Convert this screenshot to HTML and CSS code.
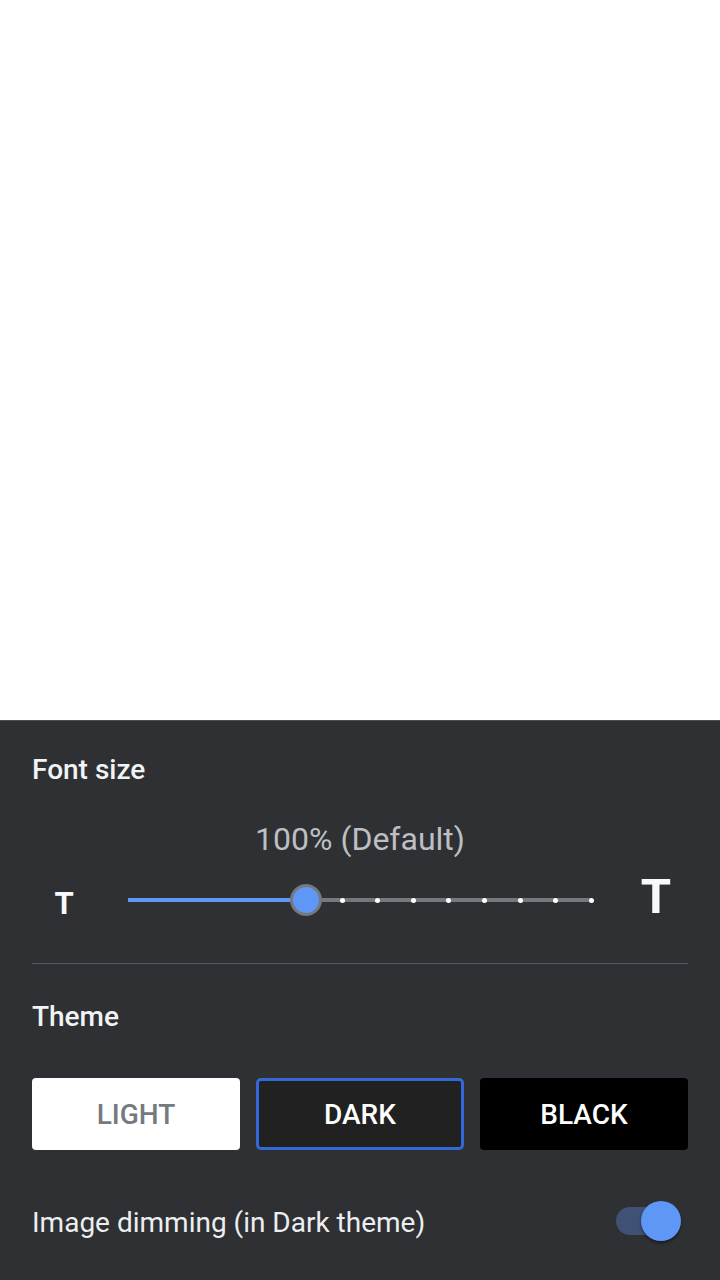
FILE: index.html
```html
<!DOCTYPE html>
<html>
<head>
<meta charset="utf-8">
<link rel="stylesheet" href="styles.css">
</head>
<body>
<div class="page"></div>
<section class="panel">
  <h2 class="title">Font size</h2>
  <div class="scale-label">100% (Default)</div>
  <div class="slider-row">
    <div class="t-small">T</div>
    <div class="slider">
      <div class="track"></div>
      <div class="fill" style="width: 38.46%"></div>
      <div class="ticks">
        <span class="tick hidden"></span><span class="tick hidden"></span><span class="tick hidden"></span><span class="tick hidden"></span><span class="tick hidden"></span><span class="tick hidden"></span>
        <span class="tick"></span><span class="tick"></span><span class="tick"></span><span class="tick"></span><span class="tick"></span><span class="tick"></span><span class="tick"></span><span class="tick"></span>
      </div>
      <div class="thumb" style="left: 38.46%"></div>
    </div>
    <div class="t-large">T</div>
  </div>
  <div class="divider"></div>
  <h2 class="title theme-title">Theme</h2>
  <div class="themes">
    <button class="theme light">LIGHT</button>
    <button class="theme dark selected">DARK</button>
    <button class="theme black">BLACK</button>
  </div>
  <div class="dimming-row">
    <span class="dimming-label">Image dimming (in Dark theme)</span>
    <span class="switch"><span class="switch-track"></span><span class="switch-thumb"></span></span>
  </div>
</section>
</body>
</html>
```
FILE: styles.css
```css
html, body {
  margin: 0;
  padding: 0;
  background: #ffffff;
  font-family: Roboto, "Noto Sans", sans-serif;
}
.page {
  height: 720px;
  background: #ffffff;
}
.panel {
  height: 559px;
  background: #2e3034;
  border-top: 1px solid #4a4c50;
  padding: 0 32px;
  box-sizing: content-box;
}
.title {
  margin: 0;
  padding-top: 33px;
  font-size: 28px;
  line-height: 32px;
  font-weight: 500;
  color: #f1f3f4;
}
.scale-label {
  margin-top: 35px;
  text-align: center;
  font-size: 32px;
  line-height: 36px;
  color: #bdbfc2;
}
.slider-row {
  display: flex;
  align-items: center;
  height: 48px;
  margin-top: 19px;
  gap: 32px;
}
.t-small {
  width: 64px;
  text-align: center;
  font-size: 31px;
  line-height: 31px;
  font-weight: 700;
  color: #f8f9fa;
  margin-top: 6px;
}
.t-large {
  width: 64px;
  text-align: center;
  font-size: 49px;
  line-height: 49px;
  font-weight: 700;
  color: #f8f9fa;
  margin-bottom: 7px;
}
.slider {
  position: relative;
  width: 464px;
  height: 48px;
}
.track {
  position: absolute;
  left: 0;
  right: 0;
  top: 22px;
  height: 4px;
  background: #75787c;
}
.fill {
  position: absolute;
  left: 0;
  top: 22px;
  height: 4px;
  background: #5e97f6;
}
.ticks {
  position: absolute;
  left: -2px;
  right: -2px;
  top: 22px;
  height: 4px;
  display: flex;
  justify-content: space-between;
}
.tick {
  width: 5px;
  height: 5px;
  margin-top: -0.5px;
  border-radius: 50%;
  background: #ffffff;
}
.tick.hidden {
  visibility: hidden;
}
.thumb {
  position: absolute;
  top: 8px;
  width: 26px;
  height: 26px;
  margin-left: -16px;
  border-radius: 50%;
  background: #5e97f6;
  border: 3px solid #75787c;
}
.divider {
  margin-top: 39px;
  height: 1px;
  background: #55585c;
}
.theme-title {
  padding-top: 37px;
}
.themes {
  display: grid;
  grid-template-columns: repeat(3, minmax(0, 1fr));
  gap: 16px;
  margin-top: 45px;
}
.theme {
  height: 72px;
  border: none;
  border-radius: 4px;
  font-family: Roboto, "Noto Sans", sans-serif;
  font-size: 28px;
  font-weight: 500;
  padding: 0;
  box-sizing: border-box;
}
.light {
  background: #ffffff;
  color: #757a80;
}
.dark {
  background: #212121;
  color: #ffffff;
}
.dark.selected {
  border: 3px solid #3468d8;
  border-radius: 5px;
}
.black {
  background: #000000;
  color: #ffffff;
}
.dimming-row {
  display: flex;
  align-items: center;
  justify-content: space-between;
  height: 56px;
  margin-top: 43px;
}
.dimming-label {
  font-size: 28px;
  line-height: 32px;
  color: #eceef0;
  padding-top: 3px;
}
.switch {
  position: relative;
  width: 65px;
  height: 40px;
  margin-right: 7px;
}
.switch-track {
  position: absolute;
  left: 0;
  right: 4px;
  top: 6px;
  height: 28px;
  border-radius: 14px;
  background: #3f5175;
}
.switch-thumb {
  position: absolute;
  right: 0;
  top: 0;
  width: 40px;
  height: 40px;
  border-radius: 50%;
  background: #5e97f6;
  box-shadow: 0 2px 3px rgba(0, 0, 0, 0.45);
}
```
